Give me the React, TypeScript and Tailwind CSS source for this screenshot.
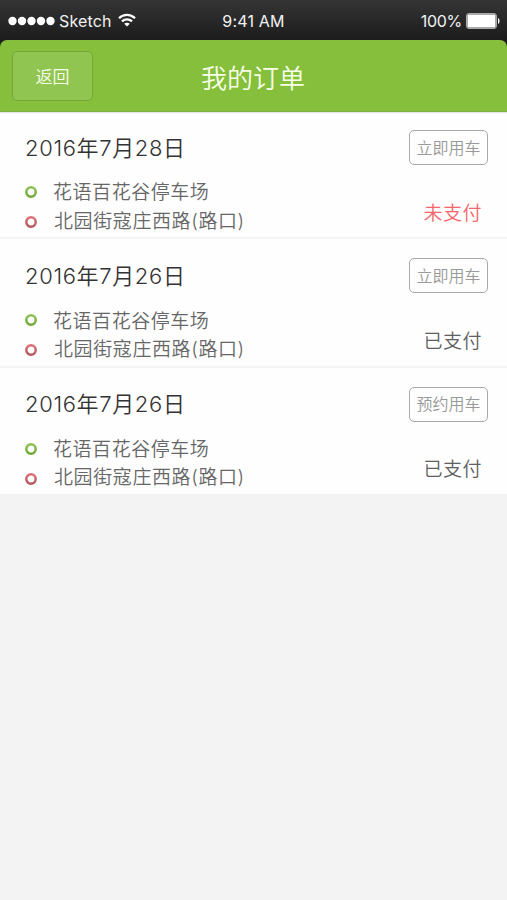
type Order = { date: string; action: string; status: string; unpaid?: boolean };

const orders: Order[] = [
  { date: '2016年7月28日', action: '立即用车', status: '未支付', unpaid: true },
  { date: '2016年7月26日', action: '立即用车', status: '已支付' },
  { date: '2016年7月26日', action: '预约用车', status: '已支付' },
];

function StatusBar() {
  return (
    <div className="flex h-10 items-center bg-linear-to-b from-[#353535] to-[#1c1c1c] pr-[7px] pl-[8px] text-[16px] text-[#f2f2f2]">
      <div className="flex flex-1 items-center">
        <svg className="mt-[2px]" width="47" height="10" viewBox="0 0 47 10" fill="white">
          <circle cx="4.5" cy="5" r="4.2" />
          <circle cx="14" cy="5" r="4.2" />
          <circle cx="23.5" cy="5" r="4.2" />
          <circle cx="33" cy="5" r="4.2" />
          <circle cx="42.5" cy="5" r="4.2" />
        </svg>
        <span className="ml-[4px] pt-px tracking-[0.150px]">Sketch</span>
        <svg className="ml-[6px]" width="18" height="14" viewBox="0 0 18 14" fill="none" stroke="white" strokeWidth="2.3">
          <path d="M1 5.2C5.5.7 12.5.7 17 5.2" />
          <path d="M4 8.4C6.8 5.6 11.2 5.6 14 8.4" />
          <path d="M9 13.6L6.2 10.8C7.8 9.4 10.2 9.4 11.8 10.8Z" fill="white" stroke="none" />
        </svg>
      </div>
      <span className="pt-px pr-[1px] text-[16px] tracking-[0.200px]">9:41 AM</span>
      <div className="flex flex-1 items-center justify-end">
        <span className="mr-[4px] pt-px text-[16px] tracking-[-0.300px]">100%</span>
        <svg className="mt-px" width="34" height="16" viewBox="0 0 34 16">
          <rect x="0.5" y="0.5" width="30" height="15" rx="2.5" fill="#555" stroke="#aaa" />
          <rect x="1.5" y="1.5" width="28" height="13" rx="1" fill="white" />
          <path d="M32 5C34 5.5 34 10.5 32 11Z" fill="white" />
        </svg>
      </div>
    </div>
  );
}

function Header() {
  return (
    <div className="relative bg-[#1c1c1c] shadow-[0_1px_1px_#e4e4e4]">
      <header className="grid h-[72px] grid-cols-[1fr_auto_1fr] items-center rounded-t-[7px] border-b border-[#7fae42] bg-[#85bf3c] px-3 text-[#f8ffe9]">
        <button className="h-[50px] w-[81px] rounded-[5px] border border-[#75a737] bg-[#91c552] pt-[4px] text-[17px] font-[350]">返回</button>
        <h1 className="pt-[6px] pr-[1px] text-[26px] font-[350]">我的订单</h1>
      </header>
    </div>
  );
}

function Ring({ from, to, className }: { from: string; to: string; className: string }) {
  const id = `ring-${from.slice(1)}`;
  return (
    <svg className={className} width="12" height="12" viewBox="0 0 12 12">
      <defs>
        <linearGradient id={id} x1="0" y1="0" x2="0" y2="1">
          <stop stopColor={from} />
          <stop offset="1" stopColor={to} />
        </linearGradient>
      </defs>
      <circle cx="6" cy="6" r="4.7" fill="none" stroke={`url(#${id})`} strokeWidth="2.5" />
    </svg>
  );
}

function OrderRow({ order }: { order: Order }) {
  return (
    <li className="flex h-[128.300px] justify-between border-b-2 border-[#f5f5f5] bg-[#fefefe] pr-[19px] pl-[25px] last:h-[126.400px] last:border-0">
      <div className="pt-[20.500px]">
        <h2 className="h-8 text-[22px] leading-8 font-[350] tracking-[0.650px] text-[#333]">{order.date}</h2>
        <div className="mt-[13.500px] flex h-[29px] items-center text-[19px] font-[350] tracking-[0.550px] text-[#666]">
          <Ring from="#8cc152" to="#6fa934" className="mt-px mr-[16px]" />
          <span className="pt-[4px]">花语百花谷停车场</span>
        </div>
        <div className="flex h-[29px] items-center text-[19px] font-[350] tracking-[0.600px] text-[#666]">
          <Ring from="#dc6f75" to="#b5585e" className="mt-[3px] mr-[17px]" />
          <span className="pt-[3px]">北园街寇庄西路(路口)</span>
        </div>
      </div>
      <div className="flex flex-col items-end pt-[19px]">
        <button className="h-[35px] w-[79px] rounded-[5px] border border-[#aaa] px-0 text-[16px] font-[350] text-[#999]">{order.action}</button>
        <span className={order.unpaid ? 'mt-[33.500px] mr-[6px] text-[19px] leading-[29px] font-[350] tracking-[0.500px] text-[#f4666c]' : 'mt-[33.500px] mr-[6px] text-[19px] leading-[29px] font-[350] tracking-[0.500px] text-[#606060]'}>
          {order.status}
        </span>
      </div>
    </li>
  );
}

export default function App() {
  return (
    <main className="min-h-screen bg-[#f3f3f3] font-['Inter','Noto_Sans_CJK_SC',sans-serif]" lang="zh-CN">
      <StatusBar />
      <Header />
      <ul className="-mt-px">
        {orders.map((order, i) => (
          <OrderRow key={i} order={order} />
        ))}
      </ul>
    </main>
  );
}
